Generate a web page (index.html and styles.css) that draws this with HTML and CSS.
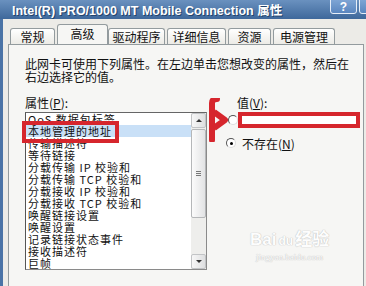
FILE: index.html
```html
<!DOCTYPE html>
<html lang="zh-CN">
<head>
    <meta charset="UTF-8">
    <title>Intel(R) PRO/1000 MT Mobile Connection 属性</title>
    <link rel="stylesheet" href="styles.css">
</head>
<body>
    <div class="titlebar">
        <span class="title">Intel(R) PRO/1000 MT Mobile Connection 属性</span>
        <div class="caption-btns">
            <span class="cbtn">?</span>
            <span class="cbtn"></span>
        </div>
    </div>

    <div class="frame">
        <div class="tabs">
            <div class="tab t1">常规</div>
            <div class="tab t2 active">高级</div>
            <div class="tab t3">驱动程序</div>
            <div class="tab t4">详细信息</div>
            <div class="tab t5">资源</div>
            <div class="tab t6">电源管理</div>
        </div>

        <div class="panel">
            <p class="intro">此网卡可使用下列属性。在左边单击您想改变的属性，然后在<br>右边选择它的值。</p>

            <div class="columns">
                <div class="props">
                    <div class="label">属性(<u>P</u>):</div>
                    <div class="listbox">
                        <ul class="items">
                            <li>QoS 数据包标签</li>
                            <li class="sel">本地管理的地址</li>
                            <li>传输描述符</li>
                            <li>等待链接</li>
                            <li>分载传输 IP 校验和</li>
                            <li>分载传输 TCP 校验和</li>
                            <li>分载接收 IP 校验和</li>
                            <li>分载接收 TCP 校验和</li>
                            <li>唤醒链接设置</li>
                            <li>唤醒设置</li>
                            <li>记录链接状态事件</li>
                            <li>接收描述符</li>
                            <li>巨帧</li>
                        </ul>
                        <div class="scrollbar">
                            <div class="sb-btn"><span class="tri up"></span></div>
                            <div class="sb-track">
                                <div class="sb-thumb"><span class="grip"></span></div>
                            </div>
                            <div class="sb-btn"><span class="tri down"></span></div>
                        </div>
                        <!-- red mark around the selected item -->
                        <div class="mark"></div>
                    </div>
                </div>

                <div class="value">
                    <div class="label">值(<u>V</u>):</div>
                    <div class="opt first">
                        <span class="radio"></span>
                        <span class="field"></span>
                    </div>
                    <div class="opt second">
                        <span class="radio checked"></span>
                        <span class="opt-text">不存在(<u>N</u>)</span>
                    </div>
                    <svg class="arrow" width="24" height="44" viewBox="0 0 24 44">
                        <path d="M6 42 L6 5 Q6 1 11 1" fill="none" stroke="#d6262d" stroke-width="6" stroke-linecap="round"/>
                        <path d="M8 14 L19 22 L8 30" fill="none" stroke="#d6262d" stroke-width="6" stroke-linejoin="round"/>
                    </svg>
                </div>
            </div>

            <div class="watermark">
                <div class="wm-logo">Bai<span class="paw">du</span>经验</div>
                <div class="wm-url">jingyan.baidu.com</div>
            </div>
        </div>
    </div>
</body>
</html>
```

FILE: styles.css
```css
* { box-sizing: border-box; }

body {
    margin: 0;
    width: 366px;
    height: 286px;
    overflow: hidden;
    font-family: "Noto Sans CJK SC", sans-serif;
    font-size: 12px;
    color: #111;
    background: #ecebe7;
}

.titlebar {
    height: 19px;
    display: flex;
    align-items: center;
    padding-left: 12px;
    overflow: hidden;
    background: linear-gradient(#6a91bf, #3e689b);
}
.title {
    color: #fff;
    font: bold 12.5px "Liberation Sans", "Noto Sans CJK SC", sans-serif;
    text-shadow: 1px 1px 0 #22436c;
    white-space: nowrap;
}
.caption-btns {
    margin-left: auto;
    margin-right: -20px;
    align-self: flex-start;
    margin-top: -4px;
    display: flex;
    gap: 2px;
}
.cbtn {
    width: 27px;
    height: 18px;
    border: 1px solid #e6eef8;
    border-radius: 3px;
    background: linear-gradient(#86acd9, #5a86bf);
    color: #fff;
    font: bold 12px "Liberation Sans", sans-serif;
    text-align: center;
    line-height: 20px;
}

.frame {
    height: 267px;
    border-left: 3px solid #4a73a6;
    padding-left: 5px;
}

.tabs {
    height: 25px;
    display: flex;
    align-items: flex-end;
}
.tab {
    height: 16px;
    margin-left: 2px;
    border: 1px solid #939b9e;
    border-bottom: none;
    border-radius: 3px 3px 0 0;
    background: linear-gradient(#ffffff, #ecebe6);
    text-align: center;
    line-height: 15px;
    white-space: nowrap;
}
.tab.active {
    height: 21px;
    margin-bottom: -1px;
    background: #f6f6f4;
    line-height: 18px;
    position: relative;
}
.tab.active + .tab { margin-left: 0; }
.t1 { width: 45px; }
.t2 { width: 51px; }
.t3 { width: 57px; }
.t4 { width: 59px; }
.t5 { width: 43px; }
.t6 { width: 62px; }

.panel {
    position: relative;
    height: 243px;
    width: 356px;
    border: 1px solid #939b9e;
    background: #f6f6f4;
    padding: 12px 0 0 16px;
}
.intro {
    margin: 0;
    line-height: 13px;
}
.label { line-height: 13px; }

.columns {
    display: flex;
    margin-top: 13px;
}
.props { width: 182px; }

.listbox {
    position: relative;
    margin-top: 3px;
    height: 158px;
    display: flex;
    background: #fff;
    border: 1px solid #8a8a8a;
    border-left-color: #555;
    border-top-color: #666;
}
.items {
    flex: 1;
    list-style: none;
    margin: 0;
    padding: 0;
}
.items li {
    height: 12px;
    line-height: 12px;
    padding-left: 2px;
    font-size: 11px;
    letter-spacing: 1px;
    white-space: nowrap;
}
.items li.sel { background: #c9e0f7; }

.scrollbar {
    width: 15px;
    display: flex;
    flex-direction: column;
    background: #eeeeec;
}
.sb-btn {
    height: 15px;
    border: 1px solid #c2c4c6;
    border-radius: 2px;
    background: linear-gradient(90deg, #f7f7f7, #dedfe0);
    display: flex;
    align-items: center;
    justify-content: center;
}
.tri {
    width: 0;
    height: 0;
    border-left: 3px solid transparent;
    border-right: 3px solid transparent;
}
.tri.up { border-bottom: 3px solid #333; }
.tri.down { border-top: 3px solid #333; }
.sb-track {
    flex: 1;
    padding-top: 1px;
}
.sb-thumb {
    height: 89px;
    border: 1px solid #b5b7b9;
    border-radius: 2px;
    background: linear-gradient(90deg, #fbfbfb, #e2e3e4);
    display: flex;
    align-items: center;
    justify-content: center;
}
.grip {
    width: 5px;
    height: 5px;
    border-top: 1px solid #777;
    border-bottom: 1px solid #777;
    position: relative;
}
.grip::after {
    content: "";
    position: absolute;
    left: 0;
    right: 0;
    top: 1px;
    border-top: 1px solid #777;
}

.mark {
    position: absolute;
    left: -4px;
    top: 8px;
    width: 97px;
    height: 22px;
    border: 4px solid #d6262d;
}

.value {
    position: relative;
    flex: 1;
    margin-left: 19px;
}
.value .label { padding-left: 11px; }
.opt {
    display: flex;
    align-items: center;
}
.opt.first {
    margin-top: 3px;
    height: 16px;
    padding-left: 2px;
}
.opt.second {
    margin-top: 9px;
    height: 12px;
}
.radio {
    width: 10px;
    height: 10px;
    border-radius: 50%;
    border: 1px solid;
    border-color: #555 #ddd #ddd #555;
    background: #fff;
    position: relative;
}
.radio.checked::after {
    content: "";
    position: absolute;
    left: 3px;
    top: 3px;
    width: 3px;
    height: 3px;
    border-radius: 50%;
    background: #000;
}
.field {
    width: 122px;
    height: 16px;
    border: 4px solid #d6262d;
    background: #fff;
}
.opt-text { margin-left: 6px; }

.arrow {
    position: absolute;
    left: -20px;
    top: 2px;
}

.watermark {
    position: absolute;
    left: 241px;
    top: 184px;
    color: #fff;
    text-shadow: 0 0 1px #b9b9b9, 0 0 1px #b9b9b9;
    opacity: .85;
    text-align: center;
}
.wm-logo {
    font: bold 17px "Liberation Sans", "Noto Sans CJK SC", sans-serif;
    line-height: 22px;
}
.paw {
    font-size: 12px;
    margin: 0 2px;
}
.wm-url {
    font: 9px "Liberation Serif", serif;
    line-height: 10px;
}
```
